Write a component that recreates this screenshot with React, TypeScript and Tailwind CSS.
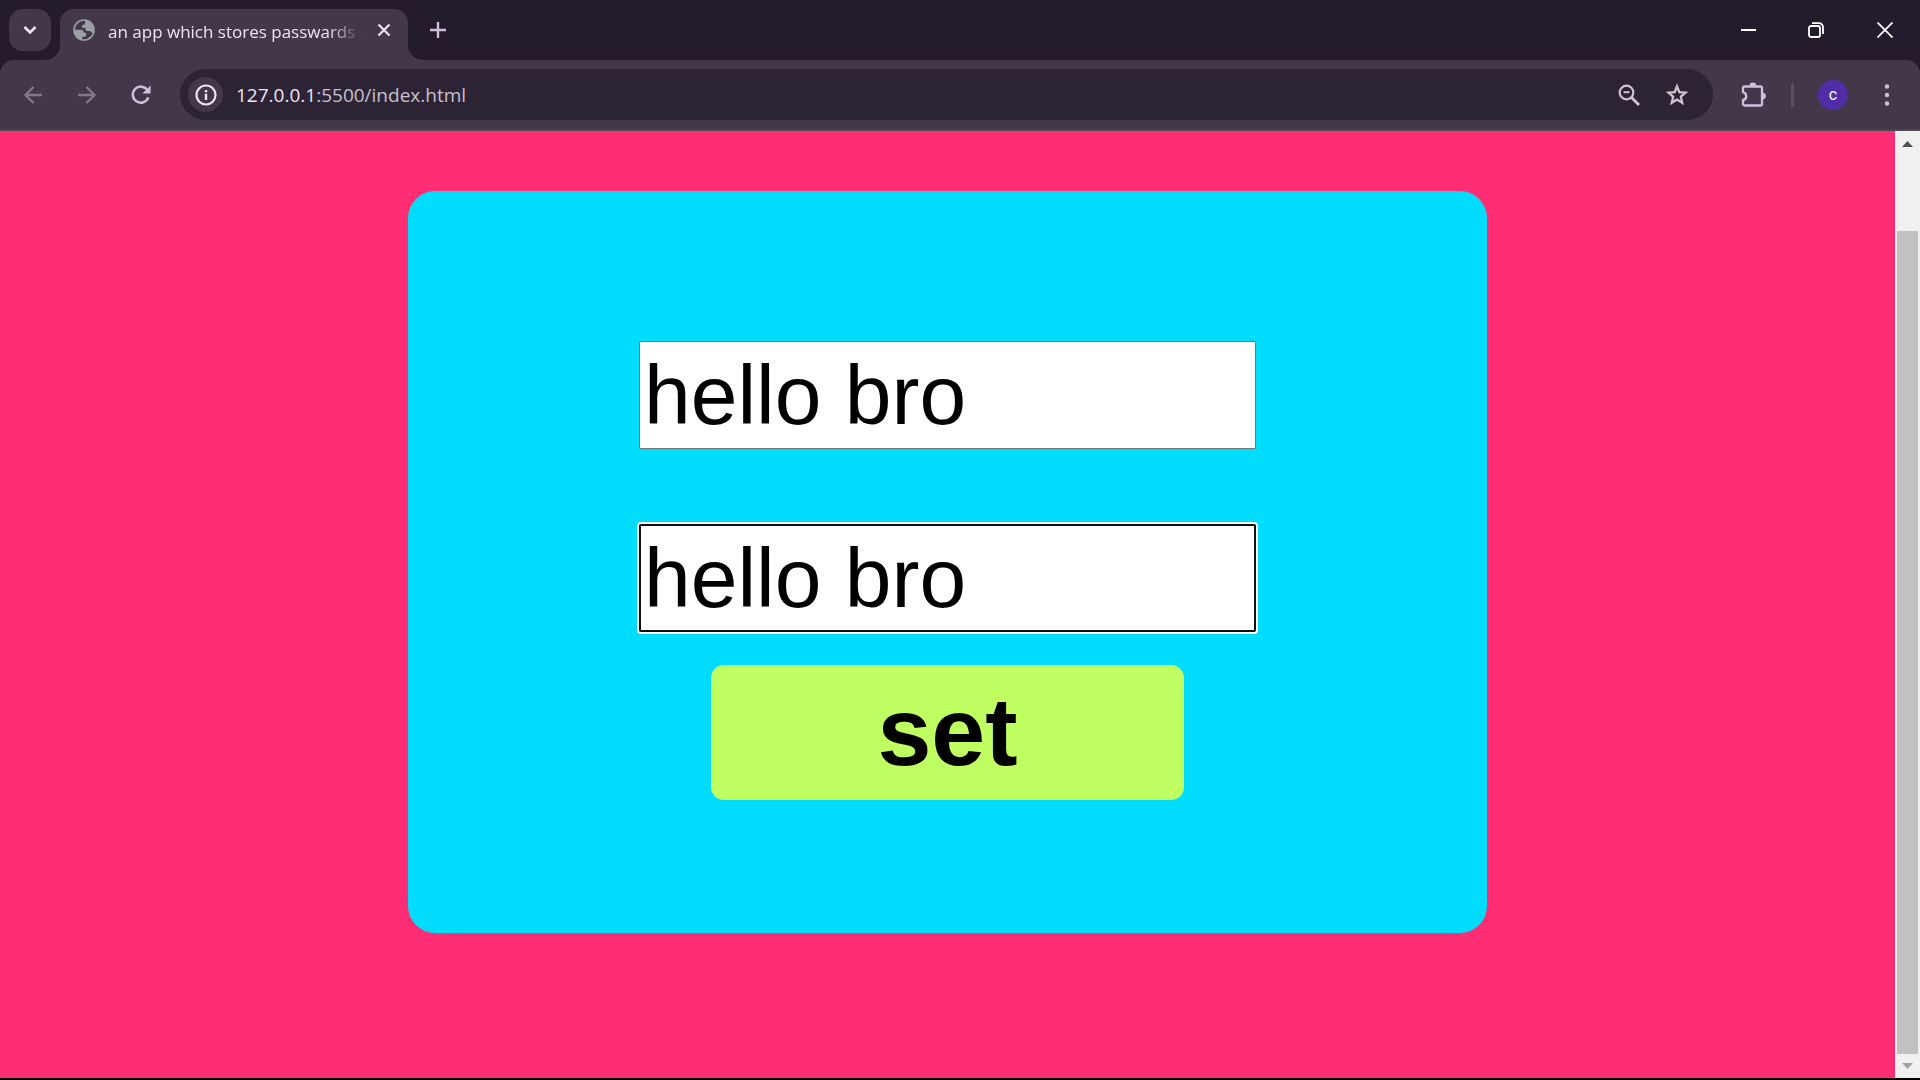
import { useState, type ReactNode } from "react";

function Globe() {
  return (
    <svg width="22" height="22" viewBox="0 0 22 22" className="shrink-0" aria-hidden="true">
      <circle cx="11" cy="11" r="10" fill="#42384a" stroke="#9aa0a6" strokeWidth="1.6" />
      <path
        fill="#9aa0a6"
        d="M12 1.2c3.8.4 7 2.8 8.4 6.3.6 2.2.6 4.500-.2 6.500-1.200-.2-2.400-.8-2.900-2h-2.800c-1.200 0-2-.8-2-2V8.800H9V7.200c0-1 .8-1.800 1.800-1.800h1.200V3.600c0-1 .2-1.800 0-2.400zM1.400 10.800h6.200c1.900 0 3.300 1.200 3.300 2.900h2.200v2.500c0 .9-.7 1.600-1.600 1.600H9.300v2.900c-4.500-.9-7.900-5-7.900-9.900z"
      />
    </svg>
  );
}

function Arrow({ direction }: { direction: "back" | "forward" }) {
  return (
    <svg width="20" height="20" viewBox="0 0 20 20" fill="none" stroke="#83778c" strokeWidth="2.400" aria-hidden="true">
      <path d={direction === "back" ? "M19 10H3M10.500 2L2.500 10l8 8" : "M1 10h16M9.500 2l8 8-8 8"} />
    </svg>
  );
}

function Reload() {
  return (
    <svg width="20" height="20" viewBox="0 0 20 20" fill="none" stroke="#cfbfdb" aria-hidden="true">
      <path d="M17.300 12.400A8 8 0 1 1 16.600 5.400" strokeWidth="2.500" />
      <path d="M19.600.400v8.200h-8.200z" fill="#cfbfdb" stroke="none" />
    </svg>
  );
}

function Star() {
  return (
    <svg width="28" height="28" viewBox="0 0 24 24" fill="none" stroke="#cdc3cf" strokeWidth="2" aria-hidden="true">
      <path d="M12 4.600l2 4.900 5.300.450-4 3.500 1.200 5.200L12 15.900l-4.500 2.750 1.200-5.200-4-3.500L10 9.500z" />
    </svg>
  );
}

function Puzzle() {
  return (
    <svg width="26" height="26" viewBox="0 0 26 26" aria-hidden="true">
      <path
        d="M4.500 4.500h16a1.500 1.500 0 0 1 1.500 1.500v16a1.500 1.500 0 0 1-1.500 1.500h-16a1.500 1.500 0 0 1-1.500-1.500v-4c2-.3 3.200-1.900 3.200-3.800s-1.200-3.500-3.200-4V6a1.500 1.500 0 0 1 1.500-1.500z"
        fill="none"
        stroke="#cfbfdb"
        strokeWidth="2.300"
        strokeLinejoin="round"
      />
      <path d="M9.500 4a3.400 3.400 0 0 1 6.800 0zM22.500 10.700a3.400 3.400 0 0 1 0 6.800z" fill="#cfbfdb" />
    </svg>
  );
}

function IconButton({ label, children, className = "" }: { label: string; children: ReactNode; className?: string }) {
  return (
    <button type="button" aria-label={label} className={`flex shrink-0 items-center justify-center ${className}`}>
      {children}
    </button>
  );
}

function Flare({ side }: { side: "left" | "right" }) {
  return (
    <svg width="15" height="15" viewBox="0 0 15 15" className="shrink-0 self-end" aria-hidden="true">
      <path d={side === "left" ? "M15 0v15H0A15 15 0 0 0 15 0z" : "M0 0v15h15A15 15 0 0 1 0 0z"} fill="#42384a" />
    </svg>
  );
}

function TabStrip() {
  return (
    <header className="flex h-[60px] shrink-0 items-center">
      <IconButton label="Search tabs" className="ml-[9px] h-[42px] w-[42px] rounded-[14px] bg-[#42384a]">
        <svg width="14" height="14" viewBox="0 0 14 14" fill="none" stroke="#ede3f3" strokeWidth="2.600" aria-hidden="true">
          <path d="M1.500 4l5.500 5.500L12.500 4" />
        </svg>
      </IconButton>
      <div className="-ml-1.5 flex h-full">
        <Flare side="left" />
        <div className="flex h-[51px] w-[348px] items-start self-end rounded-t-[14px] bg-[#42384a] pt-[10px] pl-[13px]">
          <Globe />
          <span className="ml-[13px] w-[268px] shrink-0 overflow-hidden text-[17px] leading-[26px] whitespace-nowrap text-[#ede3f3] [mask-image:linear-gradient(to_right,black_220px,transparent_254px)]">
            an app which stores passwards a
          </span>
          <IconButton label="Close tab" className="mt-[3px] h-4 w-4">
            <svg width="14" height="14" viewBox="0 0 14 14" stroke="#ede3f3" strokeWidth="2.200" aria-hidden="true">
              <path d="M1.500 1.500l11 11M12.500 1.500l-11 11" />
            </svg>
          </IconButton>
        </div>
        <Flare side="right" />
      </div>
      <IconButton label="New tab" className="-ml-px h-8 w-8">
        <svg width="16" height="16" viewBox="0 0 16 16" stroke="#cfbfdb" strokeWidth="2.400" aria-hidden="true">
          <path d="M8 0v16M0 8h16" />
        </svg>
      </IconButton>
      <div className="ml-auto flex">
        <IconButton label="Minimize" className="h-[58px] w-[68px]">
          <svg width="16" height="16" viewBox="0 0 16 16" stroke="#fff" strokeWidth="2" aria-hidden="true">
            <path d="M1 8h15" />
          </svg>
        </IconButton>
        <IconButton label="Restore" className="h-[58px] w-[68px]">
          <svg width="16" height="16" viewBox="0 0 16 16" fill="none" stroke="#fff" strokeWidth="1.800" aria-hidden="true">
            <rect x="1" y="4" width="11" height="11" rx="2" />
            <path d="M4 1.200h7a4 4 0 0 1 4 4V12" />
          </svg>
        </IconButton>
        <IconButton label="Close window" className="h-[58px] w-[70px]">
          <svg width="16" height="16" viewBox="0 0 16 16" stroke="#fff" strokeWidth="1.800" aria-hidden="true">
            <path d="M.5.500l15 15M15.500.500l-15 15" />
          </svg>
        </IconButton>
      </div>
    </header>
  );
}

function Toolbar() {
  return (
    <nav className="flex h-[71px] shrink-0 items-center rounded-t-[14px] border-b-2 border-[#4d464f] bg-[#42384a]">
      <IconButton label="Back" className="ml-[19px] h-7 w-7">
        <Arrow direction="back" />
      </IconButton>
      <IconButton label="Forward" className="ml-[26px] h-7 w-7">
        <Arrow direction="forward" />
      </IconButton>
      <IconButton label="Reload" className="ml-[26px] h-7 w-7">
        <Reload />
      </IconButton>
      <div className="ml-[25px] flex h-[51px] min-w-0 flex-1 items-center rounded-full bg-[#2c2334] pl-2">
        <IconButton label="View site information" className="h-[35px] w-[35px] rounded-full bg-[#42384a]">
          <svg width="22" height="22" viewBox="0 0 22 22" aria-hidden="true">
            <circle cx="11" cy="11" r="9.500" fill="none" stroke="#ede3f3" strokeWidth="2.200" />
            <path d="M9.800 9.700h2.400V16H9.800zM9.800 6h2.400v2.200H9.800z" fill="#ede3f3" />
          </svg>
        </IconButton>
        <span className="ml-[13px] flex-1 text-[19px] leading-7 whitespace-nowrap text-[#c9c0cf]">
          <span className="text-[#ede3f3]">127.0.0.1</span>:5500/index.html
        </span>
        <IconButton label="Zoom" className="h-7 w-7">
          <svg width="24" height="24" viewBox="0 0 24 24" fill="none" stroke="#cdc3cf" aria-hidden="true">
            <circle cx="9.500" cy="9.500" r="6.800" strokeWidth="2.200" />
            <path d="M14.500 14.500l7.500 7.500" strokeWidth="2.800" />
            <path d="M6.500 9.200h6" strokeWidth="2" />
          </svg>
        </IconButton>
        <IconButton label="Bookmark this tab" className="mr-[22px] ml-5 h-7 w-7">
          <Star />
        </IconButton>
      </div>
      <IconButton label="Extensions" className="ml-[26px] h-7 w-7">
        <Puzzle />
      </IconButton>
      <span className="ml-6 h-6 w-[3px] rounded-full bg-[#5b4e66]" />
      <IconButton label="Profile" className="ml-6 h-[30px] w-[30px] rounded-full bg-[#512da8] font-[Roboto,sans-serif] text-base text-white">
        c
      </IconButton>
      <IconButton label="Menu" className="mr-[19px] ml-[25px] h-7 w-7">
        <svg width="6" height="24" viewBox="0 0 6 24" fill="#cfbfdb" aria-hidden="true">
          <circle cx="3" cy="3.500" r="2.200" />
          <circle cx="3" cy="12" r="2.200" />
          <circle cx="3" cy="20.500" r="2.200" />
        </svg>
      </IconButton>
    </nav>
  );
}

function Scrollbar() {
  return (
    <div className="flex w-[25px] shrink-0 flex-col items-center bg-[#f0f0f0]" aria-hidden="true">
      <svg width="11" height="6" viewBox="0 0 11 6" className="mt-[10px] shrink-0" fill="#505050">
        <path d="M5.500 0L11 6H0z" />
      </svg>
      <div className="mt-[84px] w-[21px] flex-1 bg-[#c1c1c1]" />
      <svg width="11" height="6" viewBox="0 0 11 6" className="mt-[9px] mb-[9px] shrink-0" fill="#a3a3a3">
        <path d="M5.500 6L11 0H0z" />
      </svg>
    </div>
  );
}

function PasswordForm() {
  const [password, setPassword] = useState("hello bro");
  const [confirm, setConfirm] = useState("hello bro");
  return (
    <form
      onSubmit={(e) => e.preventDefault()}
      className="mx-auto flex w-[57%] max-w-[1079px] flex-col items-center rounded-[27px] bg-[#00ddfc] pt-[150px] pb-[133px] font-['Liberation_Sans',Arial,sans-serif] text-black"
    >
      <input
        aria-label="Password"
        value={password}
        onChange={(e) => setPassword(e.target.value)}
        className="h-[108px] w-[617px] rounded-[1px] border border-[#767676] bg-white px-1 text-[84px] leading-none outline-none"
      />
      <input
        aria-label="Confirm password"
        value={confirm}
        onChange={(e) => setConfirm(e.target.value)}
        className="mt-[75px] h-[108px] w-[617px] rounded-[2px] border border-[#767676] bg-white px-1 text-[84px] leading-none shadow-[0_0_0_2px_#fff] outline-2 -outline-offset-2 outline-[#101010]"
      />
      <button type="submit" className="mt-[33px] h-[135px] w-[473px] rounded-[13px] bg-[#c0ff61] pb-0.5 text-[97px] leading-none font-bold">
        set
      </button>
    </form>
  );
}

export default function App() {
  return (
    <div className="flex h-screen flex-col overflow-hidden border-b-2 border-black bg-[#241b2d] font-['Open_Sans','Noto_Sans',sans-serif]">
      <TabStrip />
      <Toolbar />
      <div className="flex min-h-0 flex-1 bg-[#ff2e74]">
        <main className="min-w-0 flex-1 pt-[60px]">
          <PasswordForm />
        </main>
        <Scrollbar />
      </div>
    </div>
  );
}
